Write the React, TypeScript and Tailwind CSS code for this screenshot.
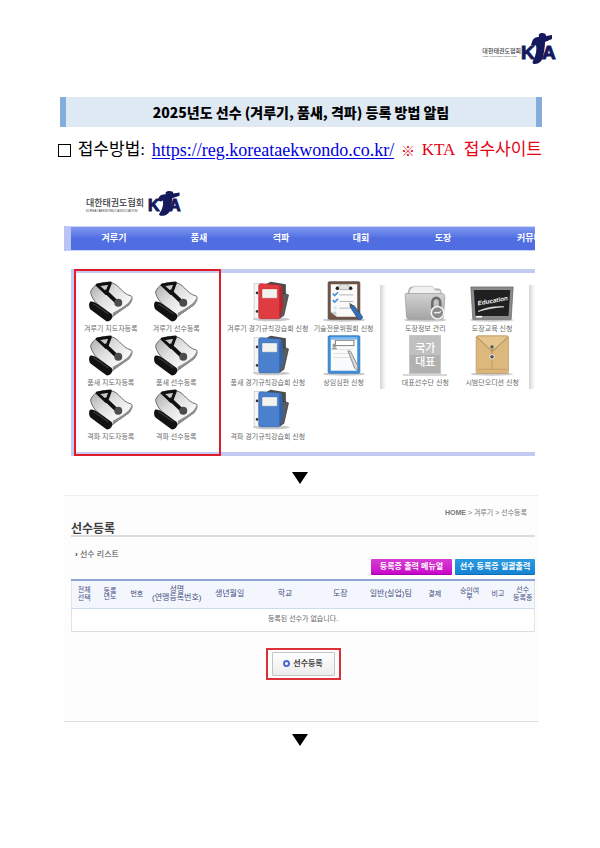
import type { ReactNode } from 'react'

const navItems = ['겨루기', '품새', '격파', '대회', '도장']

const columns = [
  { label: ['전체', '선택'], width: 25 },
  { label: ['등록', '년도'], width: 27, tight: true },
  { label: ['번호'], width: 27 },
  { label: ['성명', '(연맹등록번호)'], width: 53 },
  { label: ['생년월일'], width: 53 },
  { label: ['학교'], width: 58 },
  { label: ['도장'], width: 53 },
  { label: ['일반(실업)팀'], width: 48 },
  { label: ['결제'], width: 40 },
  { label: ['승인여', '부'], width: 30, tight: true },
  { label: ['비고'], width: 27 },
  { label: ['선수', '등록증'], width: 23 },
]

const tableWidth = columns.reduce((sum, c) => sum + c.width, 0)

function Figure() {
  return (
    <path
      d="M11 9 C12 5 15 4 18 4 C17 1 19 0 21 0 C24 0 25 1 25 3 L31 2 L31 6 L24 9 C24 14 23 19 22 24 C21 28 18 31 14 31 C11 31 11 29 13 26 C15 21 16 16 15 12 L13 13 L10 12 Z"
      fill="#15195c"
    />
  )
}

/* Association logo: caption on the left, KTA mark on the right */
function Logo({ large = false }: { large?: boolean }) {
  return (
    <div className={`flex items-center whitespace-nowrap text-[#3c3c44] ${large ? '' : 'gap-[3px]'}`}>
      <div className={large ? 'pt-1.5' : 'pt-1'}>
        <p className={large ? 'text-[6px] leading-[8px] font-medium' : 'text-[9px] leading-[11px] font-medium'}>
          대한태권도협회
        </p>
        <p className={large ? 'text-[2px] leading-[3px]' : 'text-[3px] leading-[4px]'}>
          KOREA TAEKWONDO ASSOCIATION
        </p>
      </div>
      {large ? (
        <svg viewBox="0 0 36 32" className="w-9 h-8">
          <text x="0" y="26" fontSize="19" fontWeight="700" fill="#15195c" stroke="#15195c" fontFamily="Liberation Sans, sans-serif">K</text>
          <text x="21" y="26" fontSize="19" fontWeight="700" fill="#15195c" stroke="#15195c" fontFamily="Liberation Sans, sans-serif">A</text>
          <Figure />
        </svg>
      ) : (
        <svg viewBox="0 0 36 25" className="w-9 h-[25px]">
          <text x="1" y="20" fontSize="16" fontWeight="700" fill="#15195c" stroke="#15195c" fontFamily="Liberation Sans, sans-serif">K</text>
          <text x="22" y="20" fontSize="16" fontWeight="700" fill="#15195c" stroke="#15195c" fontFamily="Liberation Sans, sans-serif">A</text>
          <g transform="scale(1.05 0.8)">
            <Figure />
          </g>
        </svg>
      )}
    </div>
  )
}

function PunchIcon() {
  return (
    <svg viewBox="0 0 132 124" className="w-11 h-[41px]">
      <defs>
        <linearGradient id="punch" x1="0" y1="0" x2="1" y2="1">
          <stop offset="0" stopColor="#a8a8a8" />
          <stop offset="0.4" stopColor="#dedede" />
          <stop offset="0.75" stopColor="#f8f8f8" />
          <stop offset="1" stopColor="#b4b4b4" />
        </linearGradient>
      </defs>
      <path d="M4 34 C10 14 30 4 56 4 C92 4 92 36 128 46 C132 50 130 60 120 72 L70 108 C46 84 12 70 4 34 Z" fill="url(#punch)" stroke="#6a6a6a" strokeWidth="3" />
      <path d="M128 50 C122 66 112 74 72 96 L70 108 L120 74 C128 66 132 56 128 50 Z" fill="#8e8e8e" />
      <path d="M24 12 L64 6 L52 38 Z" fill="none" stroke="#101010" strokeWidth="9" strokeLinejoin="round" />
      <path d="M50 32 L86 66" stroke="#101010" strokeWidth="12" strokeLinecap="round" />
      <circle cx="88" cy="66" r="12" fill="#4c4c4c" />
      <path d="M4 62 C16 60 30 72 66 98 C76 106 66 124 52 122 L6 88 C-2 82 -2 66 4 62 Z" fill="#121212" />
      <path d="M12 70 C26 74 42 88 58 100" fill="none" stroke="#363636" strokeWidth="4" />
    </svg>
  )
}

function BinderIcon({ color, dark }: { color: string; dark: string }) {
  return (
    <svg viewBox="-14 0 132 124" className="w-11 h-[41px]">
      <ellipse cx="62" cy="116" rx="56" ry="6" fill="#c9c9c9" />
      <path d="M48 8 L60 2 L106 10 L106 40 L100 98 L84 112 L50 60 Z" fill="#4c4c4c" />
      <path d="M98 36 L114 42 L100 104 L88 112 Z" fill="#5c5c5c" stroke="#333" strokeWidth="2" />
      <rect x="10" y="8" width="18" height="106" fill="#f6f6f6" stroke="#c4c4c4" strokeWidth="2" />
      <circle cx="19" cy="36" r="4" fill="#333" />
      <circle cx="19" cy="92" r="4" fill="#333" />
      <path d="M24 14 C24 10 28 8 32 8 L84 12 C90 12 94 16 94 22 L98 74 L86 114 L30 114 C26 114 24 112 24 108 Z" fill={color} stroke={dark} strokeWidth="2" />
      <path d="M86 14 L94 22 L98 74 L86 114 Z" fill={dark} />
      <rect x="34" y="24" width="46" height="28" rx="2" fill="#f2f3ee" stroke={dark} />
    </svg>
  )
}

function ClipboardIcon() {
  return (
    <svg viewBox="0 0 132 124" className="w-11 h-[41px]">
      <ellipse cx="66" cy="118" rx="64" ry="5" fill="#c9c9c9" />
      <rect x="18" y="2" width="96" height="114" rx="4" fill="#6f5546" stroke="#4a3a32" strokeWidth="2" />
      <path d="M26 10 H106 V108 H44 L26 94 Z" fill="#fafafa" />
      <path d="M26 94 L44 108 L42 92 Z" fill="#cfcfcf" />
      <path d="M42 20 C48 14 54 18 56 10 H76 C78 18 84 14 90 20 V26 H42 Z" fill="#e1e1e1" stroke="#999" strokeWidth="2" />
      <circle cx="46" cy="22" r="5" fill="#222" />
      <circle cx="86" cy="22" r="5" fill="#222" />
      <path d="M52 42 H94 M52 62 H94 M52 82 H84" stroke="#b5b5b5" strokeWidth="3" />
      <path d="M32 38 L38 44 L48 34 M32 58 L38 64 L48 54" fill="none" stroke="#4b91d6" strokeWidth="5" />
      <rect x="34" y="76" width="10" height="10" fill="#d7e9f8" />
      <path d="M84 78 L96 74 L122 108 C122 116 114 120 108 114 Z" fill="#346fb6" stroke="#24406a" strokeWidth="2" />
      <path d="M84 78 L82 66 L96 74 Z" fill="#555" />
    </svg>
  )
}

function FormIcon() {
  return (
    <svg viewBox="0 0 132 124" className="w-11 h-[41px]">
      <ellipse cx="66" cy="118" rx="64" ry="5" fill="#c9c9c9" />
      <rect x="18" y="2" width="96" height="114" rx="4" fill="#3f8fdb" stroke="#2a6fb2" strokeWidth="2" />
      <rect x="26" y="10" width="80" height="98" fill="#f8fafc" />
      <path d="M26 14 H106 V6 H26 Z" fill="#77b8ef" />
      <rect x="40" y="16" width="56" height="16" fill="#fff" stroke="#808080" strokeWidth="3" />
      <circle cx="37" cy="32" r="6" fill="#999" />
      <path d="M28 44 C30 36 44 36 46 44 Z" fill="#999" />
      <path d="M50 44 H92 M34 56 H84 M34 68 H84" stroke="#e2e2e2" strokeWidth="3" />
      <path d="M78 48 L86 50 L108 94 L106 108 L98 100 Z" fill="#d8d8d8" stroke="#8b8b8b" strokeWidth="3" />
    </svg>
  )
}

function FolderIcon() {
  return (
    <svg viewBox="0 0 132 124" className="w-11 h-[41px]">
      <defs>
        <linearGradient id="folder" x1="0" y1="0" x2="0" y2="1">
          <stop offset="0" stopColor="#d2d2d2" />
          <stop offset="1" stopColor="#a4a4a4" />
        </linearGradient>
      </defs>
      <ellipse cx="66" cy="118" rx="64" ry="5" fill="#c9c9c9" />
      <path d="M18 26 C18 20 22 18 28 18 H54 L60 24 H108 C112 24 114 28 114 32 V50 H10 Z" fill="#bdbdbd" stroke="#999" strokeWidth="2" />
      <path d="M22 24 L34 16 H88 L98 28 H112 V42 H16 Z" fill="#f0f0f0" stroke="#bbb" strokeWidth="2" />
      <path d="M8 38 H118 C124 38 126 42 126 48 L122 106 C122 114 118 116 112 116 H18 C12 116 10 112 10 106 L6 44 C6 40 6 38 8 38 Z" fill="url(#folder)" stroke="#949494" strokeWidth="2" />
      <path d="M88 84 V66 C88 46 112 46 112 66 V84" fill="none" stroke="#6c6c6c" strokeWidth="8" />
      <circle cx="104" cy="96" r="19" fill="#8b8b8b" stroke="#f3f3f3" strokeWidth="5" />
      <path d="M94 98 C100 90 106 102 114 92" fill="none" stroke="#eee" strokeWidth="4" />
    </svg>
  )
}

function BoardIcon() {
  return (
    <svg viewBox="0 0 132 124" className="w-11 h-[41px]">
      <ellipse cx="66" cy="118" rx="66" ry="5" fill="#c9c9c9" />
      <path d="M2 18 H130 L124 116 H8 Z" fill="#8a8a8a" stroke="#5e5e5e" strokeWidth="2" />
      <path d="M11 27 H121 L116 106 H16 Z" fill="#202020" />
      <text x="24" y="74" fontSize="19" fontWeight="700" fontStyle="italic" fill="#f5f5f5" transform="rotate(-10 24 74)" fontFamily="Liberation Sans, sans-serif">
        Education
      </text>
      <path d="M24 92 C44 82 70 76 102 78 C70 80 46 86 24 92 Z" fill="#eee" stroke="#eee" strokeWidth="2" />
      <path d="M18 108 H36" stroke="#fff" strokeWidth="5" />
    </svg>
  )
}

function NationalIcon() {
  return (
    <div className="flex h-[41px] w-11 justify-center border-b-2 border-[#d6d6d6]">
      <div className="flex w-8 flex-col items-center justify-center border border-[#c6c6c6] bg-linear-to-b from-[#c0c0c0] from-50% to-[#b1b1b1] to-50% text-[11px] leading-[14px] font-medium text-white">
        <span>국가</span>
        <span>대표</span>
      </div>
    </div>
  )
}

function EnvelopeIcon() {
  return (
    <svg viewBox="0 0 132 124" className="w-11 h-[41px]">
      <ellipse cx="66" cy="118" rx="64" ry="5" fill="#c9c9c9" />
      <rect x="18" y="2" width="98" height="114" rx="6" fill="#dcb87c" stroke="#b9935a" strokeWidth="2" />
      <path d="M20 6 L58 42 C64 48 70 48 76 42 L114 6" fill="#e5c58f" stroke="#a78350" strokeWidth="3" />
      <path d="M66 70 V104 M22 104 H112" stroke="#b9935a" strokeWidth="2" />
      <path d="M66 38 V66" stroke="#8f7447" strokeWidth="2" />
      <circle cx="66" cy="36" r="6" fill="#4d4d4d" stroke="#c9b694" strokeWidth="3" />
      <circle cx="66" cy="66" r="7" fill="#555" stroke="#eee" strokeWidth="3" />
    </svg>
  )
}

function Tile({ icon, label }: { icon: ReactNode; label: string }) {
  return (
    <a href="#" className="flex h-[54px] flex-col items-center whitespace-nowrap text-[7px] leading-[13px] text-[#6b6b6b]">
      {icon}
      <span>{label}</span>
    </a>
  )
}

function Column({ children }: { children: ReactNode }) {
  return <div className="flex min-w-0 flex-col">{children}</div>
}

function Divider() {
  return (
    <div className="flex justify-center pt-1">
      <div className="h-[104px] w-1.5 bg-linear-to-r from-[#d4d4d4] to-white" />
    </div>
  )
}

function Arrow() {
  return (
    <svg viewBox="0 0 16 12" className="mx-auto h-3 w-4">
      <path d="M0 0 H16 L8 12 Z" fill="#000" />
    </svg>
  )
}

function MainCapture() {
  const blue = <BinderIcon color="#4a80cc" dark="#3362a8" />
  return (
    <section className="mr-[65px] ml-16 mt-7">
      <div className="ml-[22px]">
        <Logo />
      </div>

      <nav className="mt-2.5 border-y border-l-7 border-y-[#c9d3f8] border-l-[#b9c3f6] bg-linear-to-b from-[#8297f0] to-[#506ee2] to-50%">
        <div className="grid h-[23px] grid-cols-[86fr_84fr_80fr_80fr_84fr_50fr] items-center text-center text-[9px] font-bold text-white">
          {navItems.map((item) => (
            <a key={item} href="#">{item}</a>
          ))}
          <a href="#" className="overflow-hidden pl-8 text-left whitespace-nowrap">커뮤니티</a>
        </div>
      </nav>

      <div className="mt-[18px] ml-[7px] flex border-y-4 border-l-3 border-[#c5caf3]">
        <div className="-my-1 grid w-[147px] shrink-0 grid-cols-[65fr_65fr] border-2 border-[#e01b2a] pt-2.5 pr-2.5 pb-[11px] pl-0.5">
          <Column>
            <Tile icon={<PunchIcon />} label="겨루기 지도자등록" />
            <Tile icon={<PunchIcon />} label="품새 지도자등록" />
            <Tile icon={<PunchIcon />} label="격파 지도자등록" />
          </Column>
          <Column>
            <Tile icon={<PunchIcon />} label="겨루기 선수등록" />
            <Tile icon={<PunchIcon />} label="품새 선수등록" />
            <Tile icon={<PunchIcon />} label="격파 선수등록" />
          </Column>
        </div>
        <div className="grid flex-1 grid-cols-[94fr_58fr_22fr_62fr_72fr_7fr] justify-items-center pt-2">
          <Column>
            <Tile icon={<BinderIcon color="#e13b42" dark="#b3272f" />} label="겨루기 경기규칙강습회 신청" />
            <Tile icon={blue} label="품새 경기규칙강습회 신청" />
            <Tile icon={blue} label="격파 경기규칙강습회 신청" />
          </Column>
          <Column>
            <Tile icon={<ClipboardIcon />} label="기술전문위원회 신청" />
            <Tile icon={<FormIcon />} label="상임심판 신청" />
          </Column>
          <Divider />
          <Column>
            <Tile icon={<FolderIcon />} label="도장정보 관리" />
            <Tile icon={<NationalIcon />} label="대표선수단 신청" />
          </Column>
          <Column>
            <Tile icon={<BoardIcon />} label="도장교육 신청" />
            <Tile icon={<EnvelopeIcon />} label="시범단오디션 신청" />
          </Column>
          <Divider />
        </div>
      </div>
    </section>
  )
}

function ListCapture() {
  return (
    <section className="mt-[11px] mr-[62px] ml-16 border-y border-t-[#eeeeee] border-b-[#dddddd] bg-[#fdfdfd] pt-3 pr-[3px] pb-[41px] pl-[7px]">
      <p className="pr-2 text-right text-[7px] leading-[10px] text-[#777]">
        <span className="font-bold">HOME</span> &gt; 겨루기 &gt; 선수등록
      </p>
      <h2 className="mt-[5px] border-b-2 border-[#dcdcdc] text-[12px] leading-[12px] font-bold text-[#3f3f3f]">
        선수등록
      </h2>
      <h3 className="mt-3 pl-1 text-[8px] leading-[12px] text-[#444]">
        <span className="font-bold text-[#334]">›</span> 선수 리스트
      </h3>

      <div className="-mt-0.5 flex justify-end gap-[3px] text-[8px] leading-[15px] font-bold whitespace-nowrap text-white">
        <button className="w-[81px] rounded-[1px] border-b border-[#a800aa] bg-linear-to-b from-[#d63bd2] to-[#c800c8]">
          등록증 출력 메뉴얼
        </button>
        <button className="w-20 rounded-[1px] border-b border-[#0d6db6] bg-linear-to-b from-[#2a9be0] to-[#1583d2]">
          선수 등록증 일괄출력
        </button>
      </div>

      <table className="mt-1 w-full table-fixed border-collapse border-x border-[#e4e4e4] bg-white text-center">
        <colgroup>
          {columns.map((c) => (
            <col key={c.label.join('')} style={{ width: `${(c.width / tableWidth) * 100}%` }} />
          ))}
        </colgroup>
        <thead>
          <tr className="h-7 border-t-2 border-b border-t-[#8fa3d8] border-b-[#cddbee] bg-[#f3f6fd] text-[7px] text-[#44507e]">
            {columns.map((c) => (
              <th
                key={c.label.join('')}
                className={`p-0 font-normal whitespace-nowrap ${c.width > 40 ? 'text-[8px]' : ''} ${c.tight ? 'leading-[6px]' : 'leading-[8px]'}`}
              >
                {c.label.map((line) => (
                  <div key={line} className="flex justify-center">
                    <span>{line}</span>
                  </div>
                ))}
              </th>
            ))}
          </tr>
        </thead>
        <tbody>
          <tr className="h-[23px] border-b border-[#dedede] text-[7px] text-[#666]">
            <td colSpan={columns.length} className="p-0">등록된 선수가 없습니다.</td>
          </tr>
        </tbody>
      </table>

      <div className="mx-auto mt-4 w-[75px] border-2 border-[#dd3038] px-1 py-0.5">
        <button className="flex h-6 w-full items-center justify-center gap-[3px] rounded-[1px] border border-[#c4c4c4] bg-linear-to-b from-white to-[#ececec] text-[8px] font-bold whitespace-nowrap text-[#444]">
          <span className="size-[7px] rounded-full border-2 border-[#4a68d4] bg-white" />
          선수등록
        </button>
      </div>
    </section>
  )
}

export default function App() {
  return (
    <main className="min-h-screen bg-white pb-[101px] font-['Liberation_Sans','Noto_Sans_CJK_KR',sans-serif]">
      <header className="flex justify-end pt-[33px] pr-[43px]">
        <Logo large />
      </header>

      <h1 className="mt-8 mr-[58px] ml-[60px] border-x-6 border-[#85addb] bg-[#dfe9f4] text-center font-['Noto_Sans_CJK_KR',sans-serif] text-[14px] leading-[30px] font-black text-black">
        2025년도 선수 (겨루기, 품새, 격파) 등록 방법 알림
      </h1>

      <p className="mt-2.5 mr-[58px] ml-[58px] flex items-center justify-between font-['Liberation_Serif','Noto_Sans_CJK_KR',serif] text-[17px] leading-[26px] whitespace-nowrap text-black">
        <span className="size-[13px] border border-black" />
        <span>접수방법:</span>
        <a href="https://reg.koreataekwondo.co.kr/" className="text-[18px] text-[#0000e0] underline underline-offset-2">
          https://reg.koreataekwondo.co.kr/
        </a>
        <span className="font-['Noto_Sans_CJK_KR',sans-serif] text-[14px] font-black text-[#e60012]">※</span>
        <span className="text-[#e60012]">KTA&nbsp; 접수사이트</span>
      </p>

      <MainCapture />
      <div className="mt-4">
        <Arrow />
      </div>
      <ListCapture />
      <div className="mt-3">
        <Arrow />
      </div>
    </main>
  )
}
